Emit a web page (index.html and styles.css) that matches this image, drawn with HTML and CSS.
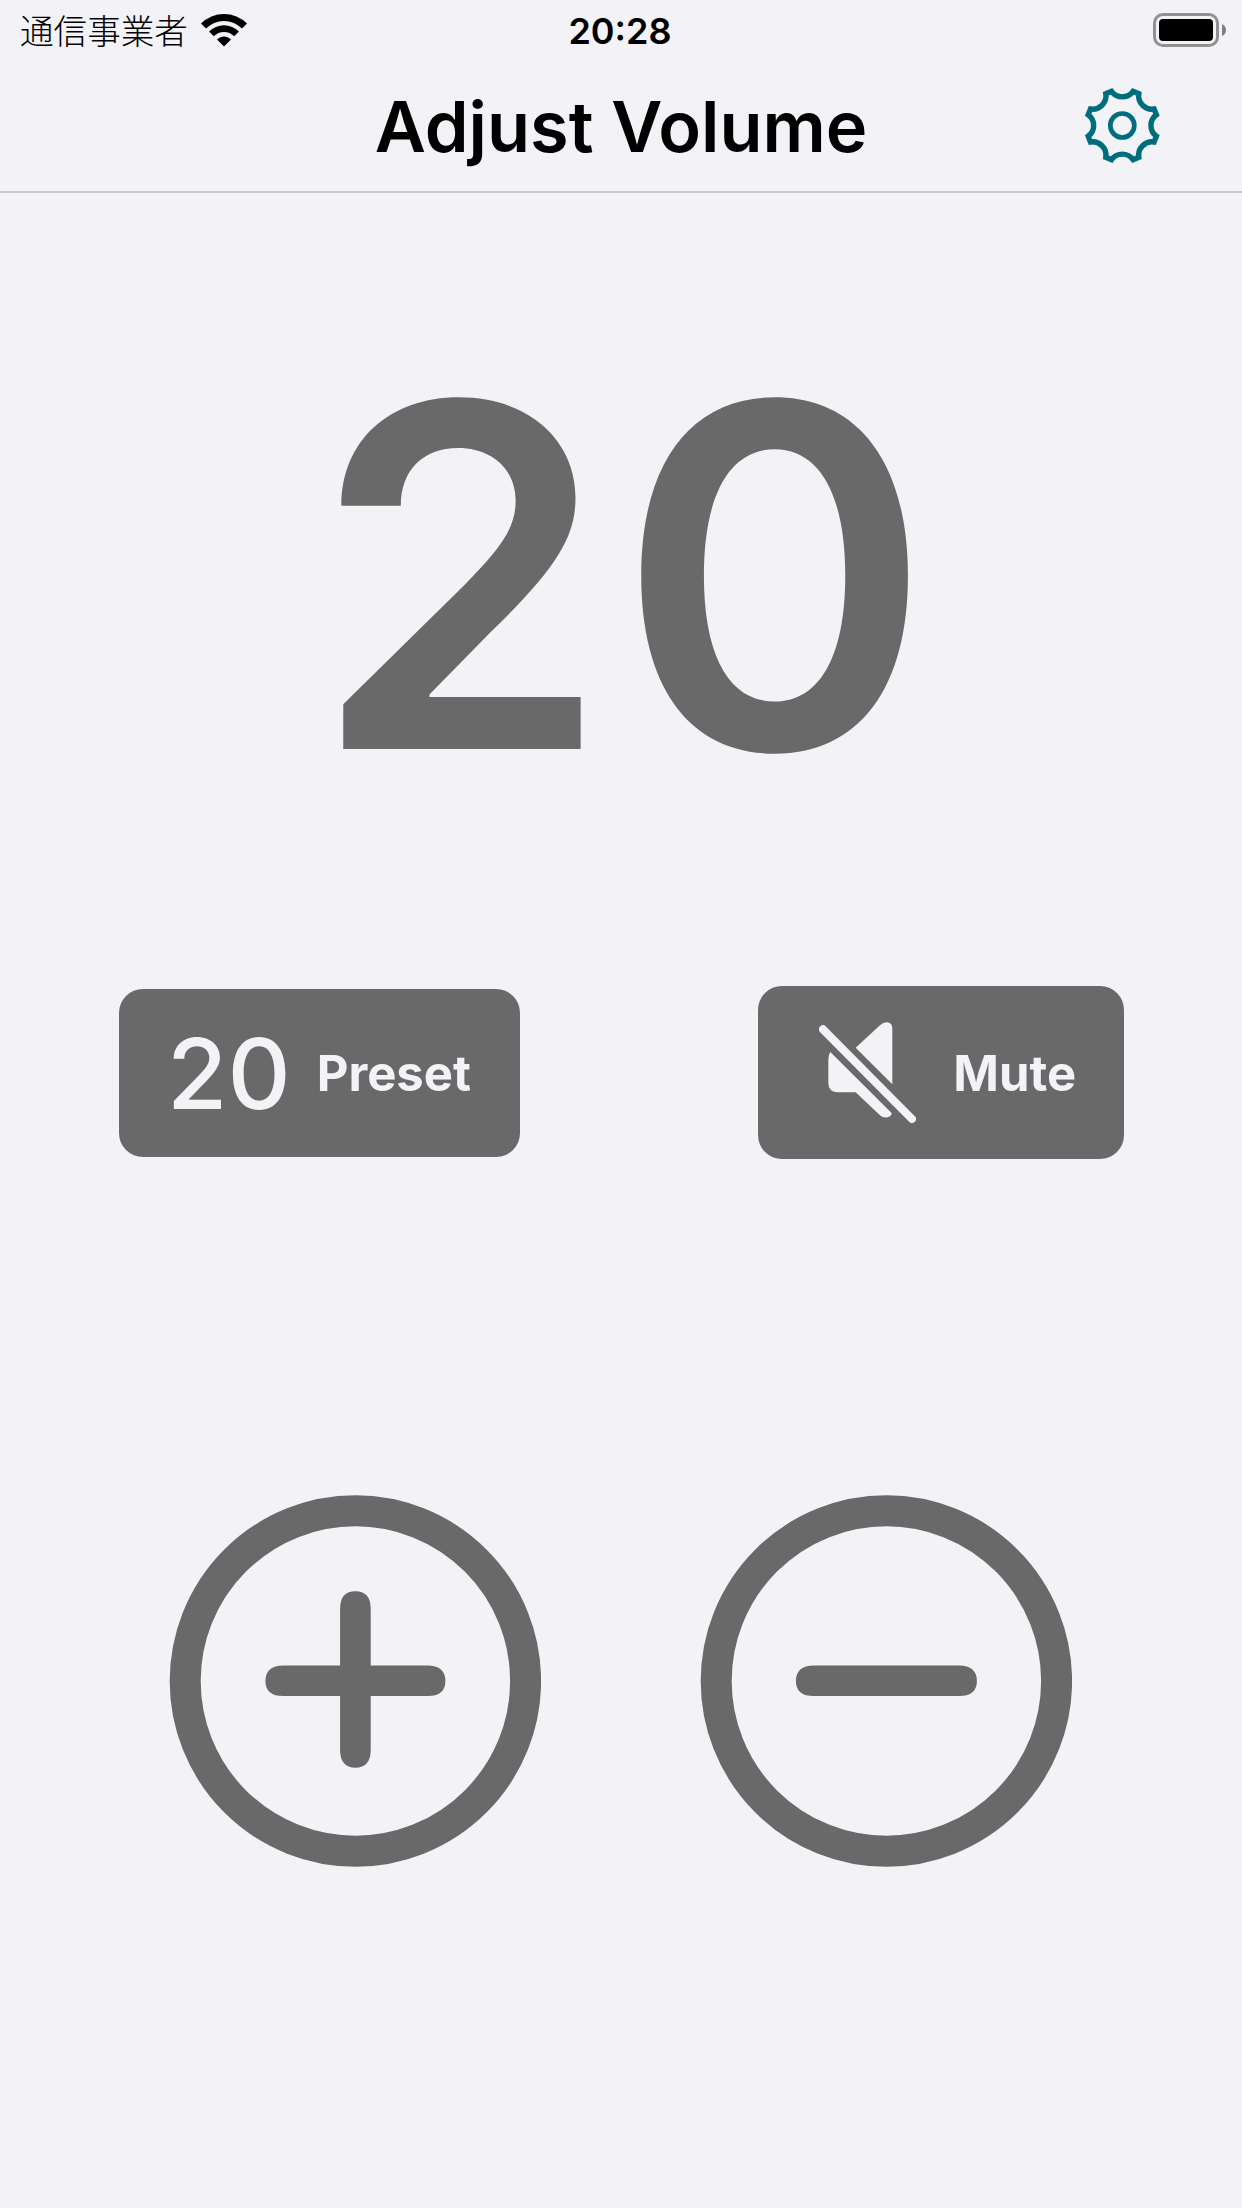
FILE: index.html
```html
<!DOCTYPE html>
<html lang="ja">
<head>
    <meta charset="UTF-8">
    <meta name="viewport" content="width=device-width, initial-scale=1.0">
    <title>Adjust Volume</title>
    <link rel="stylesheet" href="styles.css">
</head>
<body>
    <header>
        <div class="status-bar">
            <div class="carrier">
                <span class="carrier-name">通信事業者</span>
                <svg class="wifi" viewBox="0 0 46 34">
                    <path d="M0 10.5 A32.5 32.5 0 0 1 46 10.5 L41 15.5 A25.5 25.5 0 0 0 5 15.5 Z"/>
                    <path d="M8 18.5 A21.2 21.2 0 0 1 38 18.5 L33.2 23.3 A14.4 14.4 0 0 0 12.8 23.3 Z"/>
                    <path d="M16 26.5 A9.9 9.9 0 0 1 30 26.5 L23 33.5 Z"/>
                </svg>
            </div>
            <span class="time">20:28</span>
            <svg class="battery" viewBox="0 0 74 34">
                <rect x="1.5" y="1.5" width="63" height="31" rx="8.5" fill="none" stroke="#919194" stroke-width="3"/>
                <rect x="6" y="6" width="54" height="22" rx="4"/>
                <path d="M69 11 Q73 13 73 17 Q73 21 69 23 Z" fill="#7f7f82"/>
            </svg>
        </div>
        <div class="nav-bar">
            <h1>Adjust Volume</h1>
            <button class="settings-button" aria-label="Settings">
                <svg viewBox="-40.3 -39.5 80 80">
                    <path d="M-10.8 -34.1 A13.4 13.4 0 0 0 10.8 -34.1 L16.5 -31.8 A13.4 13.4 0 0 0 31.8 -16.5 L34.1 -10.8 A13.4 13.4 0 0 0 34.1 10.8 L31.8 16.5 A13.4 13.4 0 0 0 16.5 31.8 L10.8 34.1 A13.4 13.4 0 0 0 -10.8 34.1 L-16.5 31.8 A13.4 13.4 0 0 0 -31.8 16.5 L-34.1 10.8 A13.4 13.4 0 0 0 -34.1 -10.8 L-31.8 -16.5 A13.4 13.4 0 0 0 -16.5 -31.8 Z"/>
                    <circle r="12"/>
                </svg>
            </button>
        </div>
    </header>

    <main>
        <div class="volume">20</div>

        <section class="action-buttons">
            <button class="preset-button">
                <span class="preset-value">20</span>
                <span class="label">Preset</span>
            </button>
            <button class="mute-button">
                <svg viewBox="237 155 292 304">
                    <path d="M347 232 L420 165 Q432 154 443 156 Q457 159 457 174 L457 342 Z"/>
                    <path d="M271 245 L452 425 Q458 431 452 436 Q436 448 420 435 L347 366 L292 366 Q265 364 265 337 L265 268 Q265 253 271 245 Z"/>
                    <path class="slash" d="M249 177 L516 446"/>
                </svg>
                <span class="label">Mute</span>
            </button>
        </section>

        <section class="step-buttons">
            <button aria-label="Volume up">
                <svg viewBox="-186.4 -186 372 372">
                    <circle r="170.2"/>
                    <path d="M-72 -15.5 H72 C84 -15.5 90 -10 90 0 C90 10 84 15.1 72 15.1 H-72 C-84 15.1 -90 10 -90 0 C-90 -10 -84 -15.5 -72 -15.5 Z"/>
                    <path d="M-15.3 -72 V69 C-15.3 81 -10 86.7 0 86.7 C10 86.7 15.3 81 15.3 69 V-72 C15.3 -84 10 -89.7 0 -89.7 C-10 -89.7 -15.3 -84 -15.3 -72 Z"/>
                </svg>
            </button>
            <button aria-label="Volume down">
                <svg viewBox="-186.4 -186 372 372">
                    <circle r="170.2"/>
                    <path d="M-72.5 -15.5 H72.5 C84.5 -15.5 90.5 -10 90.5 0 C90.5 10 84.5 15.1 72.5 15.1 H-72.5 C-84.5 15.1 -90.5 10 -90.5 0 C-90.5 -10 -84.5 -15.5 -72.5 -15.5 Z"/>
                </svg>
            </button>
        </section>
    </main>
</body>
</html>
```

FILE: styles.css
```css
* {
    box-sizing: border-box;
}

body {
    margin: 0;
    height: 2208px;
    background-color: #f2f2f7;
    color: #000;
    font-family: Inter, "Noto Sans CJK JP", sans-serif;
}

button {
    margin: 0;
    padding: 0;
    border: none;
    background: none;
    font-family: inherit;
}

svg {
    display: block;
    flex-shrink: 0;
}

header {
    height: 193px;
    border-bottom: 2px solid #c9c8cd;
}

/* ステータスバー */
.status-bar {
    display: grid;
    grid-template-columns: 1fr auto 1fr;
    align-items: center;
    height: 60px;
    padding: 0 15px 0 20px;
}

.carrier {
    display: flex;
    align-items: center;
    gap: 13px;
}

.carrier-name {
    font-family: "Noto Sans CJK JP", sans-serif;
    font-size: 33.6px;
    font-weight: 300;
    line-height: 60px;
}

.wifi {
    width: 46px;
    height: 34px;
}

.time {
    margin-right: 7px;
    padding-top: 2px;
    font-size: 36px;
    font-weight: 580;
    line-height: 58px;
}

.battery {
    width: 74px;
    height: 34px;
    justify-self: end;
}

/* ナビゲーションバー */
.nav-bar {
    display: grid;
    grid-template-columns: 1fr auto 1fr;
    align-items: center;
    height: 131px;
}

h1 {
    grid-column: 2;
    margin: 0;
    padding-top: 2px;
    font-size: 70.3px;
    font-weight: 600;
    line-height: 129px;
}

.settings-button {
    justify-self: end;
    margin-right: 80px;
}

.settings-button svg {
    width: 80px;
    height: 80px;
    fill: none;
    stroke: #006d7a;
    stroke-width: 5.4;
}

.settings-button circle {
    stroke-width: 4.7;
}

.volume {
    height: 793px;
    padding: 83px 0 0 10px;
    color: #696969;
    font-size: 477px;
    font-weight: 580;
    line-height: 600px;
    letter-spacing: 8px;
    text-align: center;
}

.action-buttons {
    display: flex;
    justify-content: space-between;
    align-items: center;
    height: 173px;
    padding: 0 118px 0 119px;
}

.preset-button,
.mute-button {
    display: flex;
    align-items: center;
    border-radius: 24px;
    background-color: #696969;
    color: #f2f2f7;
}

.preset-button {
    width: 401px;
    height: 168px;
    padding-left: 48px;
    gap: 26px;
}

.preset-value {
    padding-top: 2px;
    font-size: 98px;
    font-weight: 530;
    line-height: 166px;
}

.label {
    padding-top: 2px;
    font-size: 49px;
    font-weight: 650;
    line-height: 166px;
}

.mute-button {
    width: 366px;
    height: 173px;
    padding-left: 61px;
    gap: 37px;
}

.mute-button svg {
    width: 97.3px;
    height: 101.3px;
    fill: #f2f2f7;
}

.slash {
    stroke: #f2f2f7;
    stroke-width: 24;
    stroke-linecap: round;
}

/* 音量の上げ下げ */
.step-buttons {
    display: flex;
    gap: 159px;
    padding: 336px 0 0 169px;
}

.step-buttons svg {
    width: 372px;
    height: 372px;
    fill: #696969;
}

.step-buttons circle {
    fill: none;
    stroke: #696969;
    stroke-width: 31;
}
```
